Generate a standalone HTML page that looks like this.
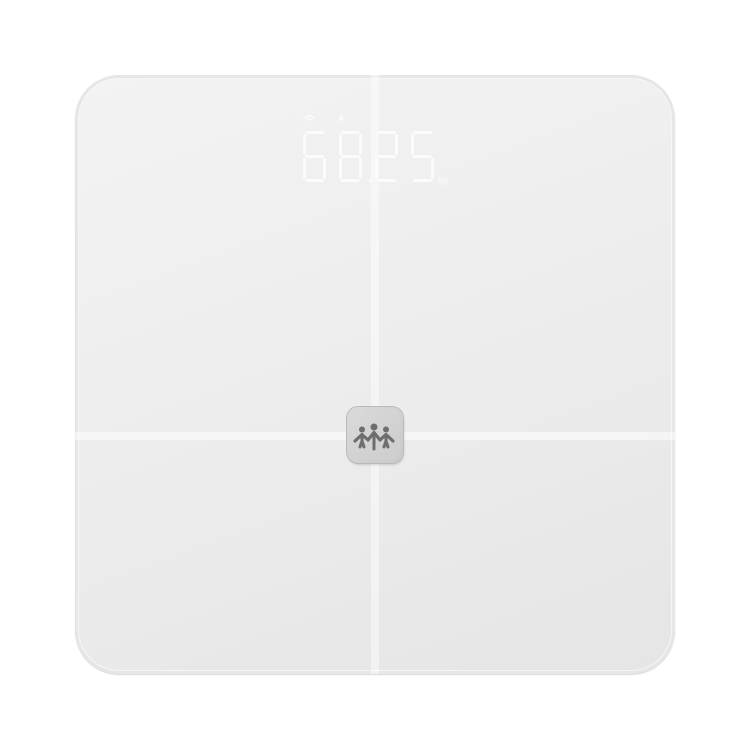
<!DOCTYPE html>
<html><head><style>
html,body{margin:0;padding:0;background:#fff;}
body{width:750px;height:750px;position:relative;overflow:hidden;font-family:"Liberation Sans",sans-serif;}
.plate{position:absolute;left:75px;top:75px;width:600px;height:599px;border-radius:44px;background:#e6e6e6;box-shadow:0 1px 1px #d8d8d8;}
.inner{position:absolute;left:3px;top:3px;right:3px;bottom:3px;border-radius:41px;background:linear-gradient(160deg,#f3f3f3 0%,#ececec 55%,#e5e5e5 100%);box-shadow:inset 0 0 0 1px #f6f6f6;}
.v{position:absolute;left:371px;top:75px;width:8px;height:599px;background:rgba(255,255,255,.45);}
.h{position:absolute;left:75px;top:432px;width:600px;height:8px;background:rgba(255,255,255,.5);}
.btn{position:absolute;left:347px;top:407px;width:56px;height:56px;border-radius:11px;background:linear-gradient(135deg,#dadada,#c9c9c9);box-shadow:0 0 0 1px #b9b9b9,1px 2px 2px rgba(0,0,0,.15);}
.btn .face{position:absolute;left:3px;top:3px;right:3px;bottom:3px;border-radius:9px;background:linear-gradient(135deg,#d9d9d9,#cdcdcd);}
.kg{position:absolute;left:438px;top:175px;font-size:9px;color:#fbfbfb;}
</style></head><body>
<div class="plate"><div class="inner"></div></div>
<div class="v"></div><div class="h"></div>
<svg style="position:absolute;left:0;top:0" width="750" height="750">
<g fill="#fbfbfb">
<rect x="305" y="131" width="19" height="3" rx="1.5"/>
<rect x="303" y="134" width="3" height="21" rx="1.5"/>
<rect x="305" y="155" width="19" height="3" rx="1.5"/>
<rect x="303" y="158" width="3" height="21" rx="1.5"/>
<rect x="323" y="158" width="3" height="21" rx="1.5"/>
<rect x="305" y="179" width="19" height="3" rx="1.5"/>
<rect x="341" y="131" width="19" height="3" rx="1.5"/>
<rect x="339" y="134" width="3" height="21" rx="1.5"/>
<rect x="359" y="134" width="3" height="21" rx="1.5"/>
<rect x="341" y="155" width="19" height="3" rx="1.5"/>
<rect x="339" y="158" width="3" height="21" rx="1.5"/>
<rect x="359" y="158" width="3" height="21" rx="1.5"/>
<rect x="341" y="179" width="19" height="3" rx="1.5"/>
<rect x="369" y="179" width="3" height="3"/>
<rect x="377" y="131" width="19" height="3" rx="1.5"/>
<rect x="395" y="134" width="3" height="21" rx="1.5"/>
<rect x="377" y="155" width="19" height="3" rx="1.5"/>
<rect x="375" y="158" width="3" height="21" rx="1.5"/>
<rect x="377" y="179" width="19" height="3" rx="1.5"/>
<rect x="413" y="131" width="19" height="3" rx="1.5"/>
<rect x="411" y="134" width="3" height="21" rx="1.5"/>
<rect x="413" y="155" width="19" height="3" rx="1.5"/>
<rect x="431" y="158" width="3" height="21" rx="1.5"/>
<rect x="413" y="179" width="19" height="3" rx="1.5"/>
<path d="M304 118 q5-4 10 0 M306 120 q3-2 6 0" stroke="#fbfbfb" stroke-width="1.5" fill="none"/>
<path d="M339 116 l4 3 -2 2 v-6 l2 2 -4 3" stroke="#fbfbfb" stroke-width="1" fill="none"/>
</g>
</svg>
<div class="kg">kg</div>
<div class="btn"><div class="face"></div>
<svg style="position:absolute;left:0;top:0" width="56" height="56" viewBox="0 0 56 56">
<g fill="#6e6e6e" stroke="#6e6e6e" stroke-linecap="round" stroke-linejoin="round">
<circle cx="15" cy="22.5" r="3" stroke="none"/>
<circle cx="27" cy="20" r="3.5" stroke="none"/>
<circle cx="39" cy="22.5" r="3" stroke="none"/>
<path d="M8 34 L15 27.5 L21 33 L27 25.5 L33 33 L39 27.5 L46 34" fill="none" stroke-width="3.2"/>
<path d="M15 28 V34 M13 40 L15 34 L17 40 M27 26 V42 M39 28 V34 M37 40 L39 34 L41 40" fill="none" stroke-width="3"/>
</g></svg>
</div>
</body></html>
